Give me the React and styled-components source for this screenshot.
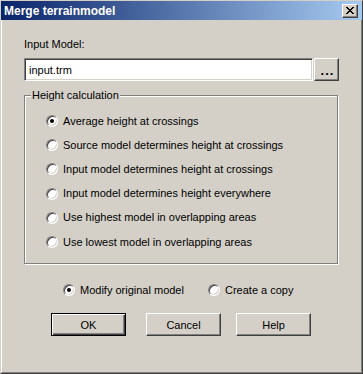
import React from 'react'
import styled, { createGlobalStyle } from 'styled-components'

const Global = createGlobalStyle`
html,body{margin:0;padding:0;background:#d4d0c8;}
body{font-family:"Liberation Sans",Arial,sans-serif;font-size:11px;color:#000;}
`;

const Window = styled.div`
width:363px;
height:374px;
box-sizing:border-box;
display:flex;
flex-direction:column;
background:#d4d0c8;
border:1px solid;
border-color:#d4d0c8 #404040 #404040 #d4d0c8;
`;

const TitleBar = styled.div`
height:19px;
flex-shrink:0;
display:flex;
align-items:center;
justify-content:space-between;
padding:0 4px 0 3px;
background:linear-gradient(to right,#0a246a,#a6caf0);
`;

const Title = styled.span`
color:#fff;
font-weight:700;
font-size:12px;
line-height:13px;
padding-top:2px;
`;

const CloseButton = styled.div`
width:16px;
height:14px;
box-sizing:border-box;
display:flex;
align-items:center;
justify-content:center;
background:#d4d0c8;
border:1px solid;
border-color:#fff #404040 #404040 #fff;
box-shadow:inset -1px -1px #808080;
`;

const Body = styled.div`
flex:1;
display:flex;
flex-direction:column;
align-items:flex-start;
padding:18px 0 0 22px;
border-left:1px solid #fff;
border-right:1px solid #808080;
border-bottom:1px solid #808080;
`;

const Label = styled.div`
line-height:13px;
`;

const FieldRow = styled.div`
display:flex;
gap:1px;
margin-top:7px;
`;

const TextField = styled.input`
width:289px;
height:23px;
box-sizing:border-box;
margin:0;
padding:0 0 0 4px;
font:inherit;
color:#000;
background:#fff;
outline:none;
border:1px solid;
border-color:#808080 #fff #fff #808080;
box-shadow:inset 1px 1px #404040,inset -1px -1px #d4d0c8;
`;

const Button = styled.button`
width:${({$w})=>$w||75}px;
height:23px;
box-sizing:border-box;
margin:0 ${({$default})=>$default?5:0}px 0 0;
padding:0;
font:inherit;
color:#000;
background:#d4d0c8;
border:1px solid;
border-color:${({$default})=>$default?'#000':'#fff #404040 #404040 #fff'};
box-shadow:${({$default})=>$default
  ?'inset 1px 1px #fff,inset -1px -1px #404040,inset -2px -2px #808080'
  :'inset -1px -1px #808080,inset 1px 1px #d4d0c8'};
`;

const Dots = styled.span`
font-weight:700;
font-size:13px;
letter-spacing:1px;
line-height:13px;
position:relative;
top:1px;
left:1px;
`;

const Group = styled.div`
position:relative;
margin-top:14px;
width:314px;
height:169px;
box-sizing:border-box;
padding:13px 0 0 21px;
display:flex;
flex-direction:column;
border:1px solid #808080;
box-shadow:inset 1px 1px #fff,1px 1px #fff;
`;

const Legend = styled.span`
position:absolute;
top:-7px;
left:6px;
padding:0 1px;
line-height:13px;
background:#d4d0c8;
`;

const Option = styled.label`
display:flex;
align-items:center;
gap:5px;
height:${({$h})=>$h||16}px;
line-height:13px;
`;

const Radio = styled.span`
position:relative;
width:12px;
height:12px;
box-sizing:border-box;
flex-shrink:0;
border-radius:50%;
background:#fff;
border:1px solid;
border-color:#808080 #fff #fff #808080;
box-shadow:inset 1px 1px #404040,inset -1px -1px #d4d0c8;
&::after{
  content:'';
  display:${({$checked})=>$checked?'block':'none'};
  position:absolute;
  left:3px;
  top:3px;
  width:4px;
  height:4px;
  border-radius:50%;
  background:#000;
}
`;

const ChoiceRow = styled.div`
display:grid;
grid-template-columns:145px auto;
margin-top:18px;
padding-left:39px;
`;

const ButtonRow = styled.div`
display:flex;
gap:15px;
margin-top:15px;
padding-left:27px;
`;

const XIcon = () => {
  const rows = [[0,1,6,7],[1,2,5,6],[2,3,4,5],[3,4],[2,3,4,5],[1,2,5,6],[0,1,6,7]];
  return (
    <svg width="8" height="7" shapeRendering="crispEdges">
      {rows.map((xs,y)=>xs.map(x=><rect key={y+'-'+x} x={x} y={y} width="1" height="1" fill="#000"/>))}
    </svg>
  );
};

const modes = [
  'Average height at crossings',
  'Source model determines height at crossings',
  'Input model determines height at crossings',
  'Input model determines height everywhere',
  'Use highest model in overlapping areas',
  'Use lowest model in overlapping areas',
];

export default function App() {
  return (
    <>
      <Global/>
      <Window>
        <TitleBar>
          <Title>Merge terrainmodel</Title>
          <CloseButton><XIcon/></CloseButton>
        </TitleBar>
        <Body>
          <Label>Input Model:</Label>
          <FieldRow>
            <TextField value="input.trm" readOnly/>
            <Button $w={25}><Dots>...</Dots></Button>
          </FieldRow>
          <Group>
            <Legend>Height calculation</Legend>
            {modes.map((m,i)=>(
              <Option key={m} $h={24.2}>
                <Radio $checked={i===0}/>
                {m}
              </Option>
            ))}
          </Group>
          <ChoiceRow>
            <Option><Radio $checked/>Modify original model</Option>
            <Option><Radio/>Create a copy</Option>
          </ChoiceRow>
          <ButtonRow>
            <Button $default>OK</Button>
            <Button>Cancel</Button>
            <Button>Help</Button>
          </ButtonRow>
        </Body>
      </Window>
    </>
  );
}
